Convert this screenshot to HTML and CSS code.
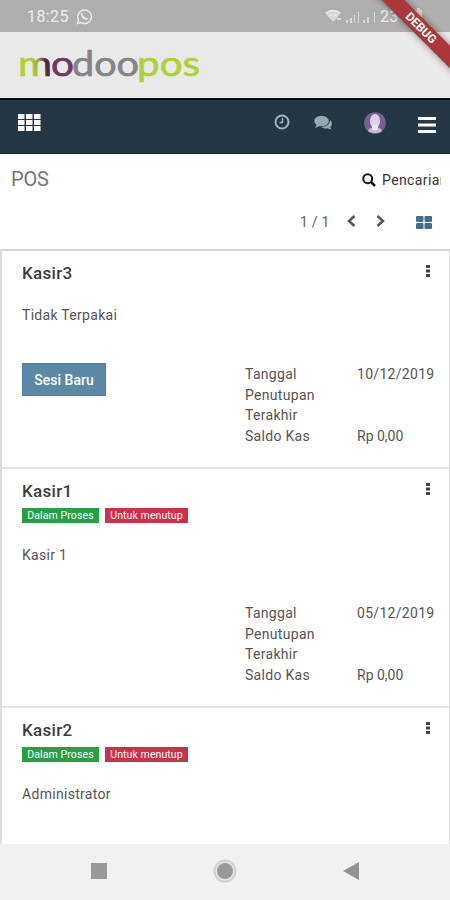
FILE: index.html
```html
<!DOCTYPE html>
<html lang="id">
<head>
<meta charset="utf-8">
<title>POS</title>
<link rel="stylesheet" href="styles.css">
</head>
<body>
<div class="screen">
  <header class="status">
    <span class="clock">18:25</span>
    <svg class="whatsapp" width="17" height="17" viewBox="0 0 17 17" fill="none" stroke="#e9e9e9"><path d="M1.5 15.5l1-3.7A6.8 6.8 0 1 1 5 14.5z" stroke-width="1.5"/><path d="M5.7 5.2c-.6 2.600 2.800 6.200 5.700 5.800" stroke-width="2"/></svg>
    <svg class="signals" width="54" height="17" viewBox="0 0 54 17" fill="#e4e4e4"><path d="M0 5Q8-1 16 5L10 12l-2 2z" opacity=".75"/><path d="M1 5q7-5 14 0M4 8q4-3 8 0" fill="none" stroke="#eee" stroke-width="1.300"/><path d="M12 10h4v2h-4zM21 12h2v3h-2zM25 10h2v5h-2zM29 7h1v8h-1zM33 4h1v11h-1zM38 12h2v3h-2zM42 9h2v6h-2zM49 4h1v11h-1z" opacity=".8"/></svg>
    <span class="battery">23%</span>
    <svg class="cell" width="9" height="16" viewBox="0 0 9 16"><path d="M1 2h2V0h3v2h2v13H1z" fill="#ddd"/></svg>
  </header>
  <div class="brand">
    <svg width="190" height="46" viewBox="0 0 190 46" class="logo">
      <defs><linearGradient id="mix" x1="0" y1=".2" x2="1" y2="0"><stop offset=".3" stop-color="#b0d136"/><stop offset=".55" stop-color="#8fa63c"/><stop offset=".72" stop-color="#4b2746"/><stop offset="1" stop-color="#673158"/></linearGradient></defs>
      <text x="-2" y="33" textLength="34" lengthAdjust="spacingAndGlyphs" fill="url(#mix)" stroke="url(#mix)">m</text>
      <text x="31" y="33" textLength="23" lengthAdjust="spacingAndGlyphs" fill="#693c60" stroke="#693c60">o</text>
      <text x="52" y="33" textLength="67" lengthAdjust="spacingAndGlyphs" fill="#858487" stroke="#858487">doo</text>
      <text x="117" y="33" textLength="63" lengthAdjust="spacingAndGlyphs" fill="#afd138" stroke="#afd138">pos</text>
    </svg>
  </div>
  <nav class="navbar">
    <svg class="apps" width="23" height="17" viewBox="0 0 23 17" fill="#fff"><path d="M0 0h6.500v5H0zM8 0h6.500v5H8zM16 0h6.500v5H16zM0 6h6.500v5H0zM8 6h6.500v5H8zM16 6h6.500v5H16zM0 12h6.500v5H0zM8 12h6.500v5H8zM16 12h6.500v5H16z"/></svg>
    <svg class="time" width="16" height="16" viewBox="0 0 16 16" fill="none" stroke="#a5b3bb"><circle cx="8" cy="8" r="6.500" stroke-width="2"/><path d="M8.500 4v4.500H5.500" stroke-width="1.500"/></svg>
    <svg class="chat" width="18" height="16" viewBox="0 0 18 16" fill="#98a7b0"><path d="M16 5c3 3 2 5 .5 7 .1 1 .7 1.500 1 2.500-1.500 0-2.500-.5-3.500-1.200-3 .5-5 0-6.500-1.300C12 12 16 9 16 5z"/><ellipse cx="7.500" cy="6" rx="7.300" ry="5.300"/><path d="M3 9l-2 4 5-2z"/></svg>
    <svg class="avatar" width="22" height="22" viewBox="0 0 22 22"><circle cx="11" cy="11" r="10.800" fill="#79628f"/><path d="M4 19c1-3 3-3 5-4h4c2 1 4 1 5 4-4 3-10 3-14 0z" fill="#c7bad2"/><ellipse cx="11" cy="9" rx="5" ry="7" fill="#ded3e5"/><path d="M8 13h6v4q-3 3-6 0z" fill="#eee7f0"/></svg>
    <svg class="menu" width="18" height="16" viewBox="0 0 18 16"><path d="M0 1.500h18M0 8h18M0 14.500h18" stroke="#fff" stroke-width="3"/></svg>
  </nav>
  <section class="controls">
    <div class="title-row">
      <h1>POS</h1>
      <svg class="glass" width="14" height="14" viewBox="0 0 14 14" fill="none" stroke="#161616"><circle cx="5.700" cy="5.700" r="4.500" stroke-width="2"/><path d="M9 9l4 4" stroke-width="2.500"/></svg>
      <span class="search">Pencarian</span>
    </div>
    <div class="pager">
      <span class="count">1 / 1</span>
      <svg class="prev" width="9" height="12" viewBox="0 0 9 12"><path d="M7.500 1L2 6l5.500 5" fill="none" stroke="#555" stroke-width="2.500"/></svg>
      <svg class="next" width="9" height="12" viewBox="0 0 9 12"><path d="M1.500 1L7 6l-5.500 5" fill="none" stroke="#555" stroke-width="2.500"/></svg>
      <svg class="kanban" width="16" height="13" viewBox="0 0 16 13" fill="#437086"><rect width="7.500" height="6" rx="1"/><rect x="8.500" width="7.500" height="6" rx="1"/><rect y="7" width="7.500" height="6" rx="1"/><rect x="8.500" y="7" width="7.500" height="6" rx="1"/></svg>
    </div>
  </section>
  <main class="list">
    <article class="card first">
      <div class="card-head"><h2>Kasir3</h2><svg class="dots" width="4" height="12" viewBox="0 0 4 12" fill="#444"><path d="M0 0h4v3H0zM0 4.500h4v3H0zM0 9h4v3H0z"/></svg></div>
      <p class="user plain">Tidak Terpakai</p>
      <div class="details">
        <button class="new">Sesi Baru</button>
        <dl><dt>Tanggal Penutupan Terakhir</dt><dd>10/12/2019</dd><dt>Saldo Kas</dt><dd class="cash">Rp 0,00</dd></dl>
      </div>
    </article>
    <article class="card">
      <div class="card-head"><h2>Kasir1</h2><svg class="dots" width="4" height="12" viewBox="0 0 4 12" fill="#444"><path d="M0 0h4v3H0zM0 4.500h4v3H0zM0 9h4v3H0z"/></svg></div>
      <div class="badges"><span class="badge green">Dalam Proses</span><span class="badge red">Untuk menutup</span></div>
      <p class="user">Kasir 1</p>
      <div class="details">
        <dl><dt>Tanggal Penutupan Terakhir</dt><dd>05/12/2019</dd><dt>Saldo Kas</dt><dd class="cash">Rp 0,00</dd></dl>
      </div>
    </article>
    <article class="card">
      <div class="card-head"><h2>Kasir2</h2><svg class="dots" width="4" height="12" viewBox="0 0 4 12" fill="#444"><path d="M0 0h4v3H0zM0 4.500h4v3H0zM0 9h4v3H0z"/></svg></div>
      <div class="badges"><span class="badge green">Dalam Proses</span><span class="badge red">Untuk menutup</span></div>
      <p class="user">Administrator</p>
    </article>
  </main>
  <footer class="system">
    <svg width="16" height="16" viewBox="0 0 16 16"><path d="M0 0h16v16H0z" fill="#999"/></svg>
    <svg width="24" height="24" viewBox="0 0 24 24"><circle cx="12" cy="12" r="10.500" fill="#e6e6e6" stroke="#d0d0d0" stroke-width="2"/><circle cx="12" cy="12" r="8" fill="#999"/></svg>
    <svg width="16" height="18" viewBox="0 0 16 18"><path d="M0 9L16 0v18z" fill="#929292"/></svg>
  </footer>
  <div class="ribbon-box"><div class="ribbon">DEBUG</div></div>
</div>
</body>
</html>
```

FILE: styles.css
```css
* { box-sizing: border-box; }
body { margin: 0; font-family: Roboto, sans-serif; color: #555; }
h1, h2, p, dl, dd { margin: 0; font-weight: 400; }
svg { display: block; flex: none; }
.screen { position: relative; width: 450px; height: 900px; overflow: hidden; display: flex; flex-direction: column; background: #fff; }
.status { height: 32px; flex: none; display: flex; align-items: center; padding-left: 27px; background: #afafaf; color: #ededed; font-size: 16px; }
.clock { width: 49px; letter-spacing: .4px; }
.signals { margin-left: 232px; }
.battery { margin-left: 1px; width: 33px; letter-spacing: .2px; }
.cell { margin-left: 1px; }
.brand { height: 66px; flex: none; background: #e9e9e9; padding: 11px 0 0 20px; border-bottom: 1px solid #eef1f2; }
.logo { font-family: Lato, sans-serif; font-size: 35px; font-weight: 400; overflow: visible; }
.logo text { stroke-width: .7px; }
.navbar { height: 56px; flex: none; display: flex; align-items: flex-start; padding: 15px 14px 0 18px; background: #253744; border-top: 2px solid #080d10; border-bottom: 1px solid #172831; }
.apps { margin-top: -1px; }
.time { margin: -1px 0 0 233px; }
.chat { margin: 0 0 0 24px; }
.avatar { margin: -3px 0 0 32px; }
.menu { margin: 2px 0 0 32px; }
.controls { height: 95px; flex: none; }
.title-row { height: 52px; display: flex; align-items: center; padding-left: 11px; }
h1 { width: 351px; font-size: 20px; letter-spacing: -.2px; line-height: 24px; margin-top: -2px; color: #757575; }
.search { width: 59px; margin-left: 6px; overflow: hidden; white-space: nowrap; font-size: 14px; letter-spacing: .4px; color: #333; }
.pager { height: 34px; display: flex; align-items: center; padding-left: 300px; }
.count { width: 47px; margin-top: -2px; font-size: 14px; letter-spacing: .2px; color: #666; }
.prev, .next { margin-top: -4px; }
.next { margin-left: 20px; }
.kanban { margin-left: 31px; margin-top: -2px; }
.list { flex: 1; min-height: 0; overflow: hidden; border-top: 2px solid #d5d5d5; border-left: 2px solid #dcdcdc; border-right: 1px solid #d5d5d5; }
.card { height: 239px; border-bottom: 2px solid #e4e4e4; padding: 11px 0 0 20px; }
.first { height: 218px; }
.card-head { height: 22px; display: flex; align-items: flex-start; justify-content: space-between; padding-right: 19px; }
.dots { margin-top: 3px; }
h2 { font-size: 17px; line-height: 22px; font-weight: 500; letter-spacing: .3px; color: #3d3d3d; }
.badges { height: 15px; display: flex; gap: 6px; margin-top: 6px; }
.badge { height: 15px; font-size: 10.500px; line-height: 15px; text-align: center; color: #fff; white-space: nowrap; letter-spacing: .1px; }
.green { width: 77px; background: #25a046; }
.red { width: 83px; background: #ca314a; }
.user { margin-top: 22px; font-size: 14px; line-height: 20px; letter-spacing: .3px; }
.plain { margin-top: 21px; }
.details { display: flex; margin-top: 38px; }
.new { width: 84px; height: 33px; padding: 0; border: 1px solid #517f9c; background: #5b89a5; color: #fff; font: 500 14px Roboto, sans-serif; }
dl { display: grid; grid-template-columns: 112px 92px; margin-left: auto; font-size: 14px; line-height: 20.700px; letter-spacing: .3px; align-content: start; }
.plain + .details dl { padding-top: 1px; }
dt { width: 80px; }
.cash { letter-spacing: 0; }
.system { height: 56px; flex: none; display: flex; align-items: center; justify-content: space-between; padding: 0 91px; background: #f1f1f1; }
.system svg { margin-top: -2px; }
.ribbon-box { position: absolute; top: 0; right: 0; width: 80px; height: 80px; overflow: hidden; }
.ribbon { position: absolute; top: 20px; left: -19px; width: 140px; height: 16px; transform: rotate(45deg); background: #ab373a; box-shadow: 0 0 6px #0007; color: #fff; font-size: 12px; font-weight: 700; line-height: 16px; text-align: center; }
```
